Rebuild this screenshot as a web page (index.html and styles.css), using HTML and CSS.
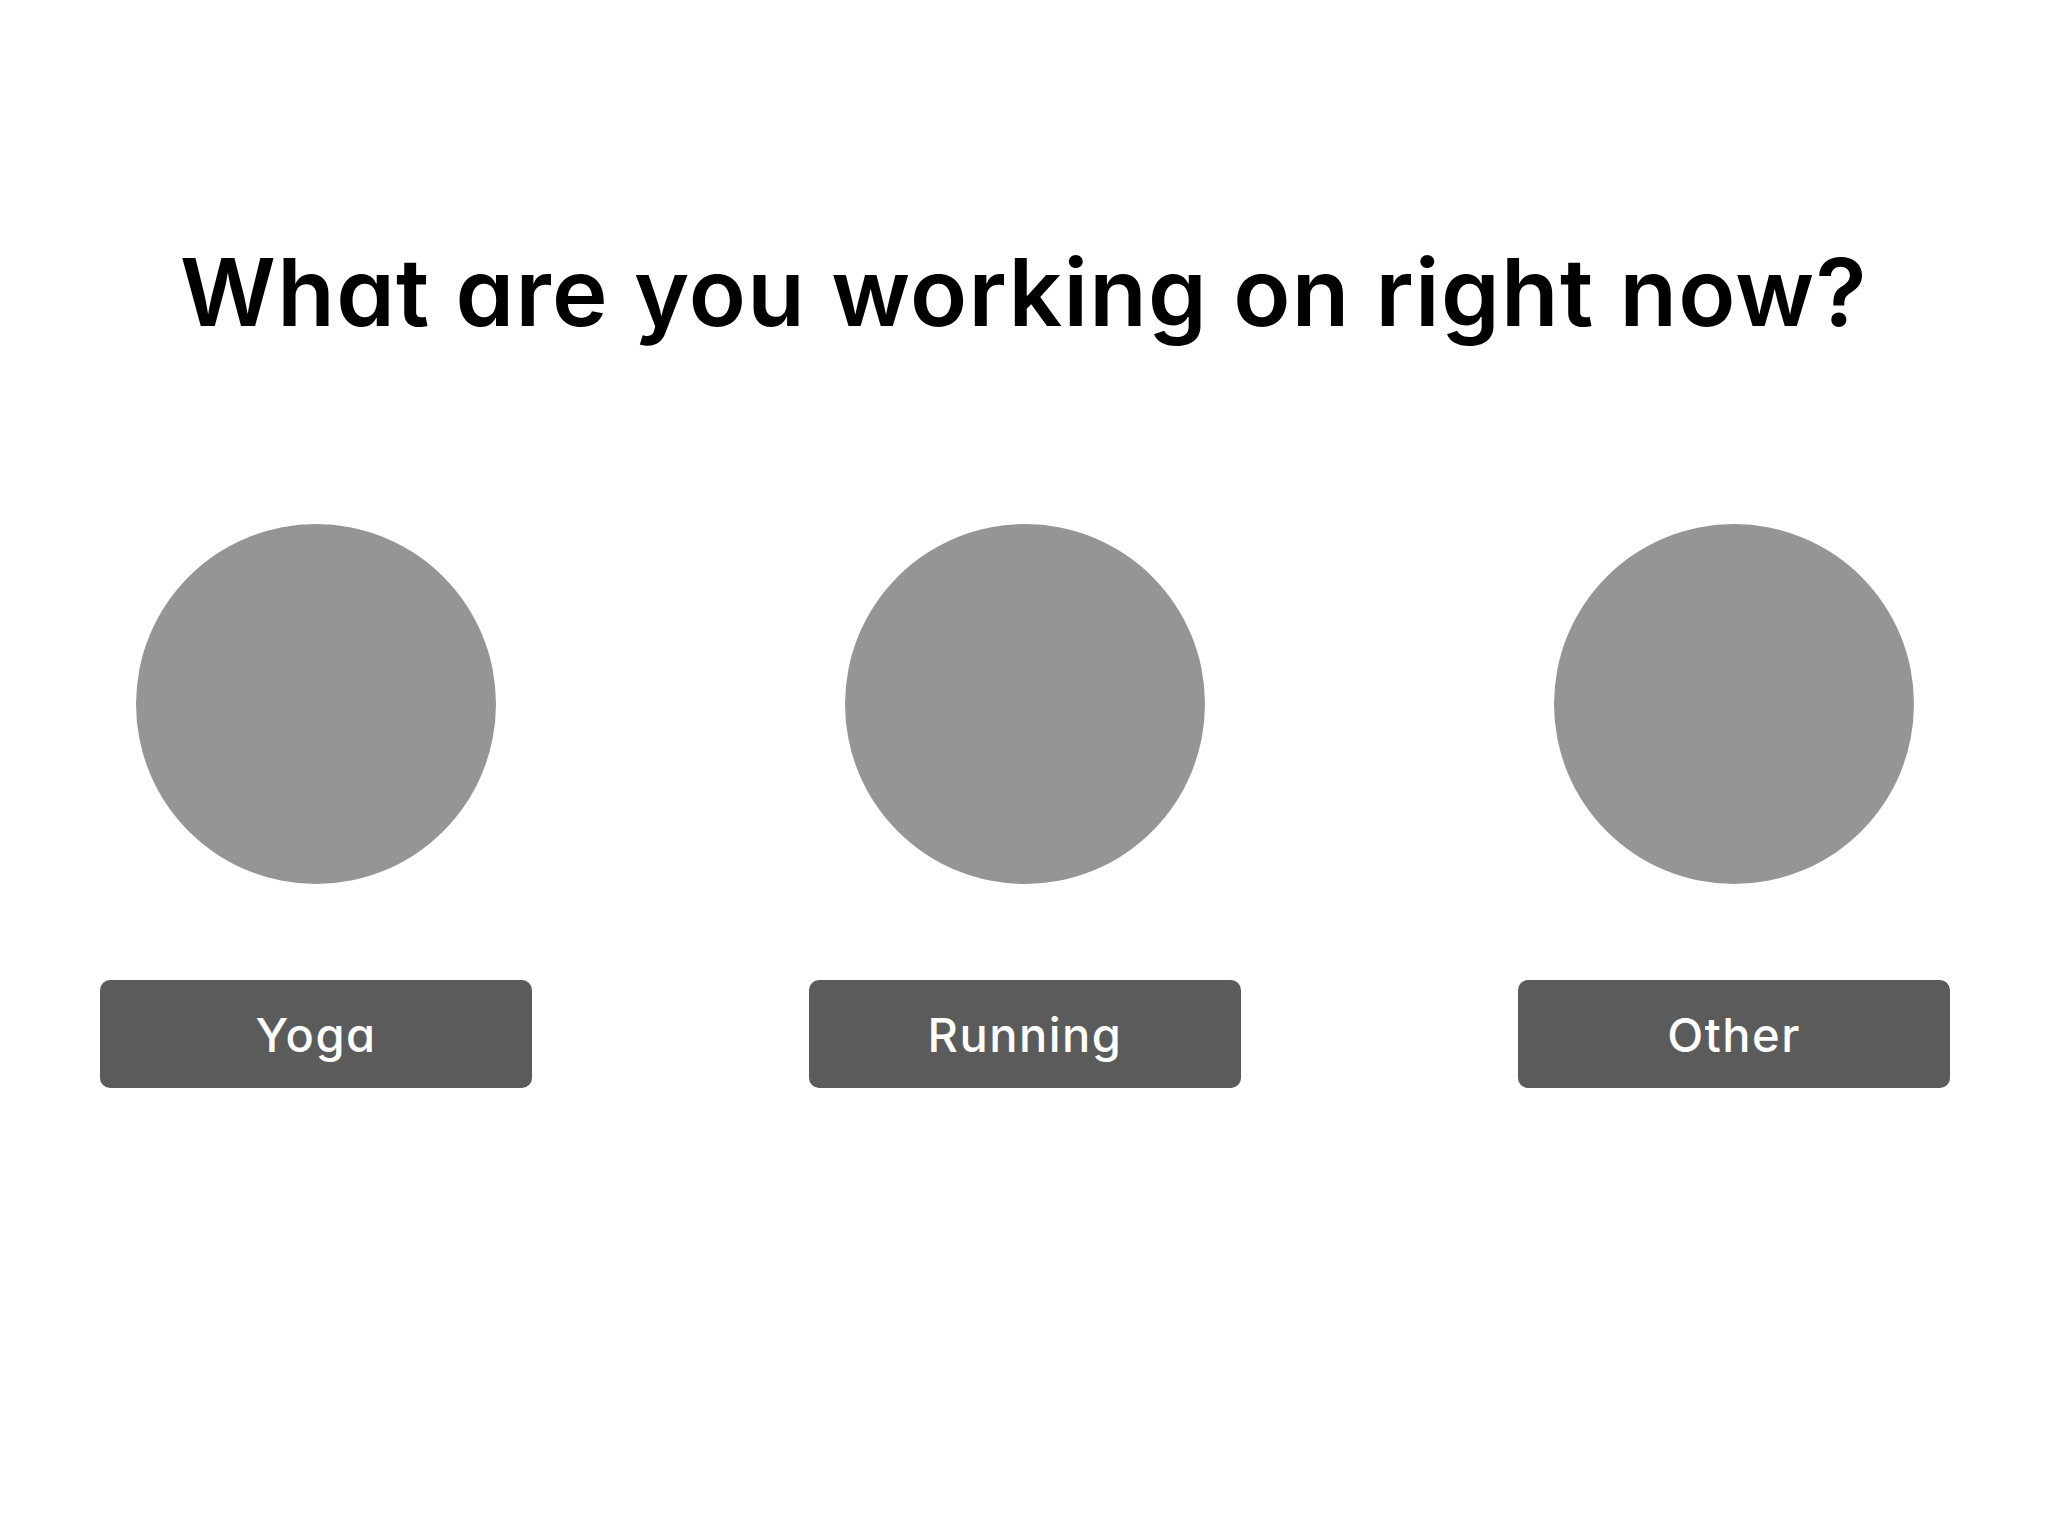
FILE: index.html
```html
<!DOCTYPE html>
<html lang="en">
<head>
<meta charset="utf-8">
<title>What are you working on right now?</title>
<link rel="stylesheet" href="styles.css">
</head>
<body>
<main class="page">
  <h1 class="title">What are you working on right now?</h1>
  <div class="options">
    <div class="option">
      <div class="option-image"></div>
      <button class="option-button" type="button">Yoga</button>
    </div>
    <div class="option">
      <div class="option-image"></div>
      <button class="option-button" type="button">Running</button>
    </div>
    <div class="option">
      <div class="option-image"></div>
      <button class="option-button" type="button">Other</button>
    </div>
  </div>
</main>
</body>
</html>
```

FILE: styles.css
```css
html, body {
  margin: 0;
  padding: 0;
  background: #ffffff;
}

body {
  font-family: Inter, "Noto Sans", "Liberation Sans", sans-serif;
  font-feature-settings: "cv11" 1;
  color: #000000;
}

.page {
  width: 2048px;
  min-height: 1520px;
  box-sizing: border-box;
  padding-top: 245px;
}

.title {
  margin: 0;
  font-size: 94px;
  line-height: 94px;
  font-weight: 600;
  letter-spacing: 1.3px;
  text-align: center;
}

.options {
  display: grid;
  grid-template-columns: repeat(3, 432px);
  column-gap: 277px;
  padding-left: 100px;
  margin-top: 185px;
}

.option {
  display: flex;
  flex-direction: column;
  align-items: center;
  gap: 96px;
}

.option-image {
  width: 360px;
  height: 360px;
  border-radius: 50%;
  background: #959595;
}

.option-button {
  width: 432px;
  height: 108px;
  border: none;
  border-radius: 10px;
  background: #5b5b5b;
  color: #ffffff;
  font-family: inherit;
  font-feature-settings: "cv11" 1;
  font-size: 47px;
  font-weight: 550;
  letter-spacing: 1.5px;
  padding: 0;
  cursor: pointer;
}
```
